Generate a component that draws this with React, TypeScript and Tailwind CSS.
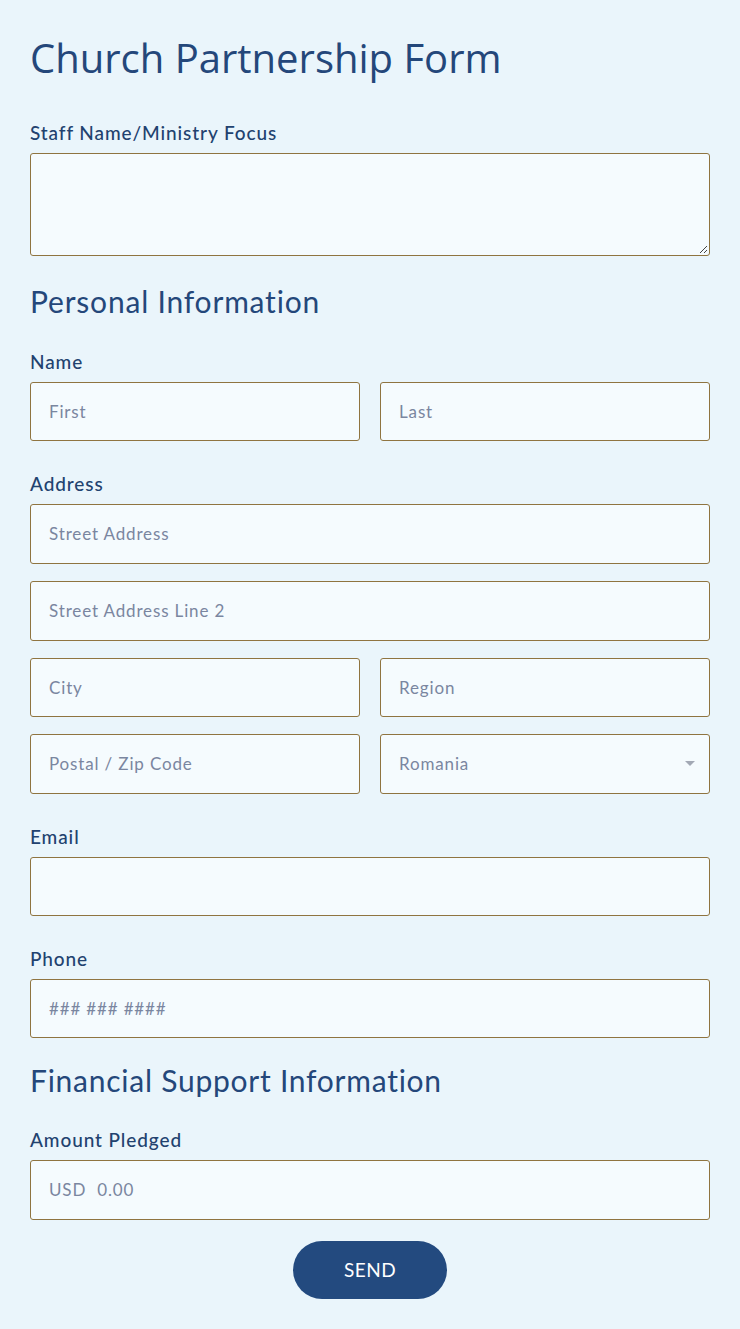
import React from "react";

const font = { fontFamily: "Lato, 'Noto Sans', sans-serif" };

function Label({ children, className = "" }: { children: React.ReactNode; className?: string }) {
  return (
    <div className={`text-[19px] leading-[24px] tracking-[0.9px] text-[#22426f] font-medium mb-[8px] ${className}`}>{children}</div>
  );
}

function Field({ placeholder = "", className = "" }: { placeholder?: string; className?: string }) {
  return (
    <div
      className={`h-[59px] border border-[#8f7440] rounded-[3px] bg-[#f5fbfe] flex items-center pl-[18px] text-[17px] tracking-[0.85px] text-[#7a86a0] ${className}`}
    >
      {placeholder}
    </div>
  );
}

export default function App() {
  return (
    <div className="min-h-[1329px] bg-[#eaf5fb] px-[30px] pt-[34px]" style={font}>
      <h1
        className="text-[40px] leading-[48px] text-[#24477a] font-normal"
        style={{ fontFamily: "'Open Sans', sans-serif" }}
      >
        Church Partnership Form
      </h1>

      <Label className="mt-[39px]">Staff Name/Ministry Focus</Label>
      <div className="relative h-[103px] border border-[#8f7440] rounded-[3px] bg-[#f5fbfe]">
        <svg className="absolute right-[1px] bottom-[1px]" width="10" height="10" viewBox="0 0 10 10">
          <line x1="9" y1="2" x2="2" y2="9" stroke="#444" strokeWidth="1" />
          <line x1="9" y1="6" x2="6" y2="9" stroke="#444" strokeWidth="1" />
        </svg>
      </div>

      <h2 className="mt-[27px] text-[30px] leading-[36px] tracking-[0.8px] text-[#24477a] font-normal">Personal Information</h2>

      <Label className="mt-[31px]">Name</Label>
      <div className="grid grid-cols-2 gap-[20px]">
        <Field placeholder="First" />
        <Field placeholder="Last" />
      </div>

      <Label className="mt-[31px]">Address</Label>
      <div className="flex flex-col gap-[17px]">
        <Field placeholder="Street Address" className="h-[60px]" />
        <Field placeholder="Street Address Line 2" className="h-[60px]" />
        <div className="grid grid-cols-2 gap-[20px]">
          <Field placeholder="City" />
          <Field placeholder="Region" />
        </div>
        <div className="grid grid-cols-2 gap-[20px]">
          <Field placeholder="Postal / Zip Code" className="h-[60px]" />
          <div className="h-[60px] border border-[#8f7440] rounded-[3px] bg-[#f5fbfe] flex items-center justify-between pl-[18px] pr-[14px] text-[17px] tracking-[0.85px] text-[#7a86a0]">
            <span>Romania</span>
            <svg width="10" height="6" viewBox="0 0 10 6">
              <polygon points="0,0 10,0 5,5" fill="#a3a9b5" />
            </svg>
          </div>
        </div>
      </div>

      <Label className="mt-[31px]">Email</Label>
      <Field />

      <Label className="mt-[31px]">Phone</Label>
      <Field placeholder="### ### ####" />

      <h2 className="mt-[24px] text-[30px] leading-[36px] tracking-[0.75px] text-[#24477a] font-normal">
        Financial Support Information
      </h2>

      <Label className="mt-[30px]">Amount Pledged</Label>
      <div className="h-[60px] border border-[#8f7440] rounded-[3px] bg-[#f5fbfe] flex items-center pl-[18px] text-[17px] tracking-[0.85px] text-[#7a86a0] gap-[11px]">
        <span>USD</span>
        <span>0.00</span>
      </div>

      <div className="flex justify-center mt-[21px]">
        <button className="w-[154px] h-[58px] rounded-full bg-[#234a7f] text-white text-[19px] tracking-[0.5px]">
          SEND
        </button>
      </div>
    </div>
  );
}
